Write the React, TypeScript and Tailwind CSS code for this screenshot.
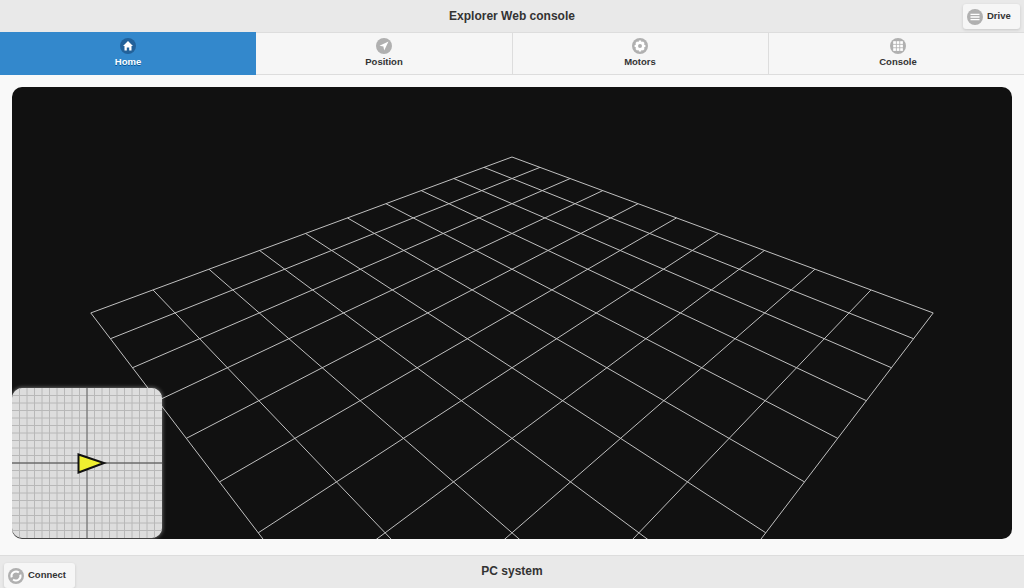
import type { ReactNode } from "react";

const font = "font-['Liberation_Sans',Arial,sans-serif]";

// projection of the 10x10 floor grid, in canvas coordinates (canvas origin is 12,87)
function project(u: number, v: number) {
    const den = 1 - 0.0359 * (u + v);
    return {
        x: 500 + ((v - u) * 27.0) / den,
        y: (157 + 4.36 * (u + v)) / den - 87,
    };
}

const steps = Array.from({ length: 11 }, (_, i) => i);

function FloorGrid() {
    return (
        <svg className="block h-full w-full" viewBox="0 0 1000 452">
            {steps.map((k) => {
                const a = project(k, 0);
                const b = project(k, 10);
                const c = project(0, k);
                const d = project(10, k);
                return (
                    <g key={k} stroke="#c0c0c0" strokeWidth="1">
                        <line x1={a.x} y1={a.y} x2={b.x} y2={b.y} />
                        <line x1={c.x} y1={c.y} x2={d.x} y2={d.y} />
                    </g>
                );
            })}
        </svg>
    );
}

function MiniMap() {
    const ticks = Array.from({ length: 19 }, (_, i) => (i + 1) * 7.5);
    return (
        <div className="absolute bottom-[17px] left-3 h-[150px] w-[150px] overflow-hidden rounded-[10px] bg-[#dddddd] shadow-[0_0_4px_rgba(255,255,255,0.5)]">
            <svg className="block h-full w-full" viewBox="0 0 150 150">
                {ticks.map((t) => (
                    <g key={t} stroke="#b8b8b8" strokeWidth="1">
                        <line x1={t} y1="0" x2={t} y2="150" />
                        <line x1="0" y1={t} x2="150" y2={t} />
                    </g>
                ))}
                <line x1="75" y1="0" x2="75" y2="150" stroke="#666666" strokeWidth="1" />
                <line x1="0" y1="75" x2="150" y2="75" stroke="#444444" strokeWidth="1" />
                <polygon points="66.5,66.5 66.5,84.5 92,75" fill="#f0f030" stroke="#111111" strokeWidth="2" />
            </svg>
        </div>
    );
}

function IconDisc({ children, dark }: { children: ReactNode; dark?: boolean }) {
    return (
        <span className={`flex h-4 w-4 shrink-0 items-center justify-center rounded-full ${dark ? "bg-[#22619a]" : "bg-[#b0b0b0]"}`}>
            <svg className="h-4 w-4" viewBox="0 0 16 16" fill="#ffffff">
                {children}
            </svg>
        </span>
    );
}

const tabs: { label: string; icon: ReactNode; active?: boolean; extra?: string }[] = [
    {
        label: "Home",
        active: true,
        icon: <path d="M8 3 L13 8 H11.5 V12.5 H9.2 V9.5 H6.8 V12.5 H4.5 V8 H3 Z" />,
    },
    {
        label: "Position",
        icon: <path d="M12.5 3.5 L8.2 12.5 L7.4 8.6 L3.5 7.8 Z" />,
    },
    {
        label: "Motors",
        extra: "border-l border-l-[#dddddd] pr-px",
        icon: (
            <path
                fillRule="evenodd"
                d="M6.9 2.6 H9.1 L9.5 4.1 L11 3.5 L12.5 5 L11.9 6.5 L13.4 6.9 V9.1 L11.9 9.5 L12.5 11 L11 12.5 L9.5 11.9 L9.1 13.4 H6.9 L6.5 11.9 L5 12.5 L3.5 11 L4.1 9.5 L2.6 9.1 V6.9 L4.1 6.5 L3.5 5 L5 3.5 L6.5 4.1 Z M8 6 A2 2 0 1 0 8 10 A2 2 0 1 0 8 6 Z"
            />
        ),
    },
    {
        label: "Console",
        extra: "border-l border-l-[#dddddd] pl-[3px]",
        icon: (
            <>
                {[3.2, 6.7, 10.2].map((x) =>
                    [3.2, 6.7, 10.2].map((y) => <rect key={`${x}-${y}`} x={x} y={y} width="2.7" height="2.7" />)
                )}
            </>
        ),
    },
];

export default function App() {
    return (
        <div className={`flex h-[588px] w-[1024px] flex-col overflow-hidden bg-[#f9f9f9] ${font}`}>
            <header className="relative flex h-[32px] shrink-0 items-center justify-center bg-[#e9e9e9]">
                <h1 className="text-[12px] font-bold text-[#333333]">Explorer Web console</h1>
                <button className="absolute right-1 top-1 flex h-[25px] w-[57px] items-center gap-1 rounded-[3px] bg-[#f6f6f6] pl-1 text-[9.5px] font-bold text-[#333333] shadow-[0_1px_3px_rgba(0,0,0,0.15)]">
                    <IconDisc>
                        <path d="M3.5 4.7 H12.5 V6 H3.5 Z M3.5 7.3 H12.5 V8.7 H3.5 Z M3.5 10 H12.5 V11.3 H3.5 Z" />
                    </IconDisc>
                    Drive
                </button>
            </header>

            <nav className="grid h-[43px] shrink-0 grid-cols-4 bg-[#f6f6f6]">
                {tabs.map((tab) => (
                    <button
                        key={tab.label}
                        className={`flex flex-col items-center border-y pt-[5px] text-[9.5px] font-bold leading-[13px] ${
                            tab.active
                                ? "border-y-[#3388cc] bg-[#3388cc] text-white [text-shadow:0_1px_0_#005599]"
                                : "border-y-[#dddddd] text-[#333333] [text-shadow:0_1px_0_#f3f3f3]"
                        } ${tab.extra ?? ""}`}
                    >
                        <IconDisc dark={tab.active}>{tab.icon}</IconDisc>
                        <span className="mt-[1px]">{tab.label}</span>
                    </button>
                ))}
            </nav>

            <main className="relative flex-1 p-3">
                <div className="h-[452px] overflow-hidden rounded-[10px] bg-[#111111]">
                    <FloorGrid />
                </div>
                <MiniMap />
            </main>

            <footer className="relative flex h-[33px] shrink-0 items-center justify-center border-t border-[#dddddd] bg-[#e9e9e9] pb-[2px]">
                <p className="text-[12px] font-bold text-[#333333]">PC system</p>
                <button className="absolute left-1 top-[7px] flex h-[25px] w-[71px] items-center gap-1 rounded-[3px] bg-[#f6f6f6] pl-1 text-[9.5px] font-bold text-[#333333] shadow-[0_1px_3px_rgba(0,0,0,0.15)]">
                    <IconDisc>
                        <path
                            fill="none"
                            stroke="#ffffff"
                            strokeWidth="2"
                            d="M3.7 9.4 A4.5 4.5 0 0 1 10.9 4.6 M12.3 6.6 A4.5 4.5 0 0 1 5.1 11.4"
                        />
                    </IconDisc>
                    Connect
                </button>
            </footer>
        </div>
    );
}
